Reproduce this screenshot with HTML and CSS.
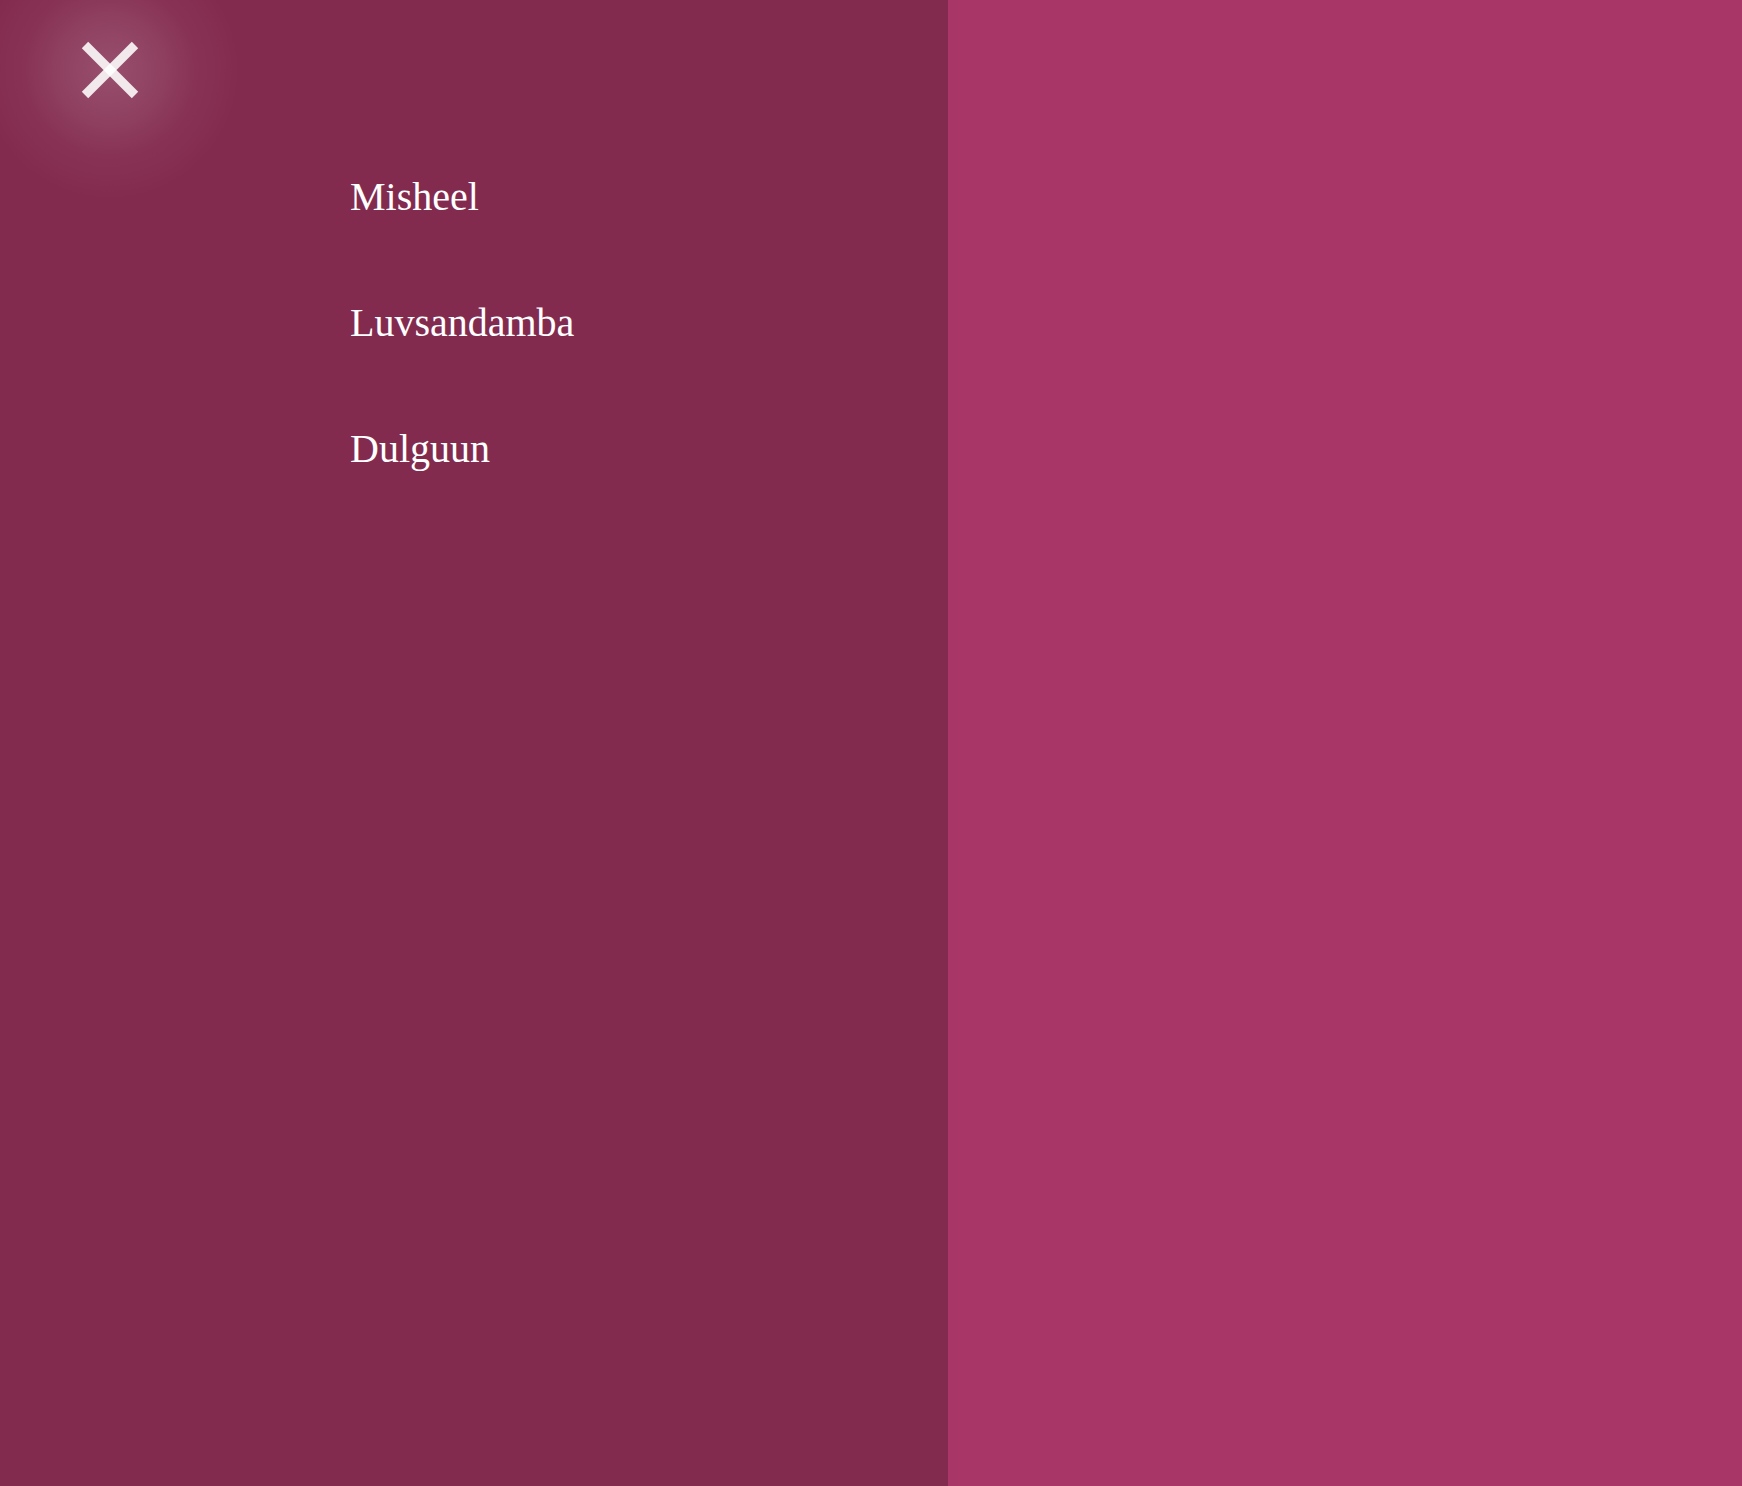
FILE: index.html
```html
<!DOCTYPE html>
<html>
<head>
<meta charset="utf-8">
<link rel="stylesheet" href="styles.css">
</head>
<body>
<div class="page">
  <aside class="drawer">
    <button class="close" aria-label="Close">
      <svg width="60" height="60" viewBox="0 0 60 60">
        <line x1="5" y1="5" x2="55" y2="55" class="stroke"/>
        <line x1="55" y1="5" x2="5" y2="55" class="stroke"/>
      </svg>
    </button>
    <nav class="menu">
      <a href="#" class="item">Misheel</a>
      <a href="#" class="item">Luvsandamba</a>
      <a href="#" class="item">Dulguun</a>
    </nav>
  </aside>
  <main class="content"></main>
</div>
</body>
</html>
```
FILE: styles.css
```css
html, body {
  margin: 0;
  padding: 0;
  height: 100%;
}
body {
  font-family: "Liberation Serif", "Times New Roman", serif;
}
.page {
  display: flex;
  height: 1486px;
}
.drawer {
  position: relative;
  width: 948px;
  flex: none;
  background: #832b4f;
}
.content {
  flex: 1;
  background: #a83666;
}
.close {
  position: absolute;
  left: -20px;
  top: -60px;
  width: 260px;
  height: 260px;
  border: 0;
  padding: 0;
  margin: 0;
  border-radius: 50%;
  background: radial-gradient(circle closest-side at center, rgba(255,255,255,0.17) 0%, rgba(255,255,255,0.11) 35%, rgba(255,255,255,0.04) 65%, rgba(255,255,255,0) 100%);
  display: flex;
  align-items: center;
  justify-content: center;
  cursor: pointer;
}
.stroke {
  stroke: rgba(255,255,255,0.88);
  stroke-width: 9;
}
.menu {
  display: flex;
  flex-direction: column;
  padding-top: 134px;
  padding-left: 350px;
}
.item {
  display: block;
  color: #ffffff;
  text-decoration: none;
  font-size: 40px;
  line-height: 126px;
  height: 126px;
}
```
